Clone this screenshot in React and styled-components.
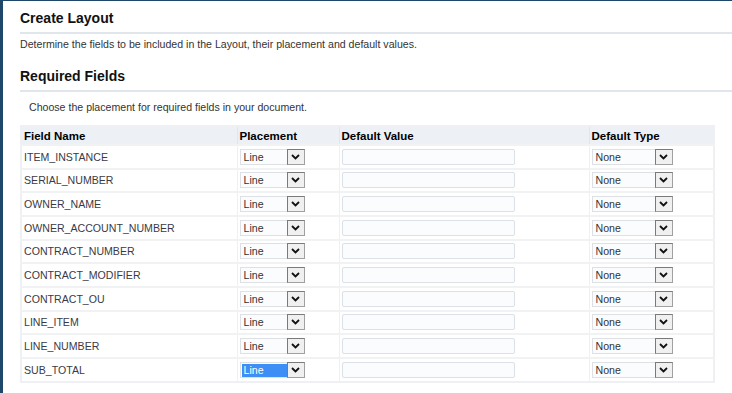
import React from 'react';
import styled, { createGlobalStyle } from 'styled-components';

const GlobalStyle = createGlobalStyle`
  html, body {
    margin: 0;
    padding: 0;
    background: #fff;
  }
  body {
    font-family: "Liberation Sans", Arial, sans-serif;
  }
`;

const Page = styled.div`
  width: 732px;
  height: 393px;
  box-sizing: border-box;
  border-left: 3px solid #1f4769;
  border-top: 1px solid #1f4769;
  padding: 9px 0 0 17px;
  overflow: hidden;
`;

const Heading = styled.h1`
  margin: 0;
  font-size: 14px;
  font-weight: bold;
  color: #111;
  padding-bottom: 6px;
  border-bottom: 2px solid #e1e6ec;
`;

const Intro = styled.p`
  margin: ${p => p.gap || 4}px 0 0;
  font-size: 10.6px;
  color: #333;
  padding-left: ${p => p.indent || 0}px;
`;

const SubHeading = styled(Heading)`
  margin-top: 18px;
`;

const Table = styled.table`
  margin-top: 12px;
  border-collapse: collapse;
  width: 693px;
  font-size: 10.6px;
  color: #3b3a44;
  border: 2px solid #eef0f3;
  table-layout: fixed;
`;

const Col = styled.col`
  width: ${p => p.w}px;
`;

const Th = styled.th`
  text-align: left;
  font-size: 11.5px;
  font-weight: bold;
  color: #000;
  background: #edf1f6;
  height: 17px;
  padding: 0 2px;
  border: 1px solid #e2e6eb;
  border-top: none;
`;

const Td = styled.td`
  height: 21.67px;
  padding: 0 2px;
  border-top: 2px solid #f0f2f4;
  border-left: 1px solid #eef0f3;
  border-right: 1px solid #eef0f3;
  vertical-align: middle;
  white-space: nowrap;
`;

const SelectBox = styled.span`
  display: inline-flex;
  align-items: stretch;
  height: 16px;
  vertical-align: middle;
`;

const SelectValue = styled.span`
  box-sizing: border-box;
  width: ${p => p.w}px;
  border: 1px solid #dde1e6;
  border-right: none;
  background: #fbfcfd;
  padding: 1px 0 0 1px;
  font-size: 10.6px;
  line-height: 13px;
  color: #333;
`;

const Highlight = styled.span`
  display: inline-block;
  width: 100%;
  height: 100%;
  background: ${p => (p.on ? '#3d8ff5' : 'transparent')};
  color: ${p => (p.on ? '#fff' : 'inherit')};
  padding-left: 2px;
  box-sizing: border-box;
`;

const SelectButton = styled.span`
  box-sizing: border-box;
  width: 18px;
  border: 1px solid #7a7a7a;
  border-right-color: #a0a0a0;
  border-bottom-color: #a0a0a0;
  background: #f0f0f0;
  display: flex;
  align-items: center;
  justify-content: center;
`;

const TextInput = styled.span`
  display: inline-block;
  box-sizing: border-box;
  width: 173px;
  height: 16px;
  border: 1px solid #dce1e7;
  border-radius: 2px;
  background: #fbfcfe;
  vertical-align: middle;
`;

const Chevron = () => (
  <svg width="9" height="6" viewBox="0 0 9 6">
    <path d="M1 1 L4.5 4.5 L8 1" fill="none" stroke="#111" strokeWidth="1.8" />
  </svg>
);

const Select = ({ value, w, selected }) => (
  <SelectBox>
    <SelectValue w={w}>
      <Highlight on={selected ? 1 : 0}>{value}</Highlight>
    </SelectValue>
    <SelectButton>
      <Chevron />
    </SelectButton>
  </SelectBox>
);

const fields = [
  'ITEM_INSTANCE',
  'SERIAL_NUMBER',
  'OWNER_NAME',
  'OWNER_ACCOUNT_NUMBER',
  'CONTRACT_NUMBER',
  'CONTRACT_MODIFIER',
  'CONTRACT_OU',
  'LINE_ITEM',
  'LINE_NUMBER',
  'SUB_TOTAL',
];

const App = () => (
  <Page>
    <GlobalStyle />
    <Heading>Create Layout</Heading>
    <Intro>Determine the fields to be included in the Layout, their placement and default values.</Intro>
    <SubHeading>Required Fields</SubHeading>
    <Intro indent={9} gap={9}>Choose the placement for required fields in your document.</Intro>
    <Table>
      <colgroup>
        <Col w={216} />
        <Col w={102} />
        <Col w={250} />
        <Col w={125} />
      </colgroup>
      <thead>
        <tr>
          <Th>Field Name</Th>
          <Th>Placement</Th>
          <Th>Default Value</Th>
          <Th>Default Type</Th>
        </tr>
      </thead>
      <tbody>
        {fields.map((f, i) => (
          <tr key={f}>
            <Td>{f}</Td>
            <Td>
              <Select value="Line" w={47} selected={i === fields.length - 1} />
            </Td>
            <Td>
              <TextInput />
            </Td>
            <Td>
              <Select value="None" w={63} />
            </Td>
          </tr>
        ))}
      </tbody>
    </Table>
  </Page>
);

export default App;
